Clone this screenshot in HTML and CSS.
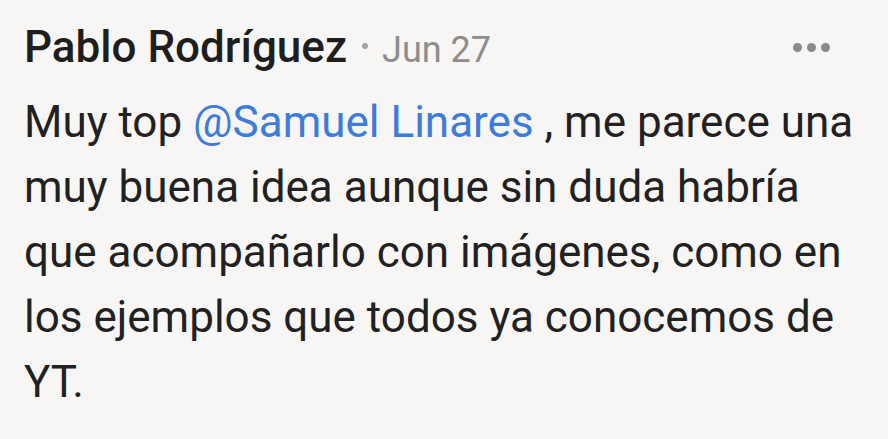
FILE: index.html
```html
<!DOCTYPE html>
<html lang="es">
<head>
<meta charset="utf-8">
<link rel="stylesheet" href="styles.css">
</head>
<body>
<div class="comment">
  <div class="header">
    <span class="author">Pablo Rodríguez</span>
    <span class="sep"></span>
    <span class="date">Jun 27</span>
    <span class="more"><i></i><i></i><i></i></span>
  </div>
  <p class="text">Muy top <span class="mention">@Samuel Linares</span> , me parece una muy buena idea aunque sin duda habría que acompañarlo con imágenes, como en los ejemplos que todos ya conocemos de YT.</p>
</div>
</body>
</html>
```
FILE: styles.css
```css
html, body {
  margin: 0;
  padding: 0;
  background: #f7f6f5;
}
body {
  width: 888px;
  height: 439px;
  overflow: hidden;
  font-family: Roboto, "Noto Sans", sans-serif;
  color: #212121;
}
.comment {
  padding: 21px 24px 0 24px;
}
.header {
  display: flex;
  align-items: baseline;
  height: 52px;
  line-height: 52px;
}
.author {
  font-size: 44px;
  font-weight: 500;
  color: #1e1e1e;
}
.sep {
  align-self: center;
  width: 6px;
  height: 6px;
  border-radius: 50%;
  background: #a3a3a3;
  margin: 0 14px 2px 15px;
}
.date {
  font-size: 36px;
  color: #8d8d8d;
}
.more {
  align-self: center;
  margin-left: auto;
  margin-right: 34px;
  display: flex;
  gap: 5px;
}
.more i {
  width: 9px;
  height: 9px;
  border-radius: 50%;
  background: #8a8a8a;
}
.text {
  margin: 16.5px 0 0 0;
  font-size: 44px;
  line-height: 65px;
  width: 852px;
}
.mention {
  color: #3d7cd8;
}
```
